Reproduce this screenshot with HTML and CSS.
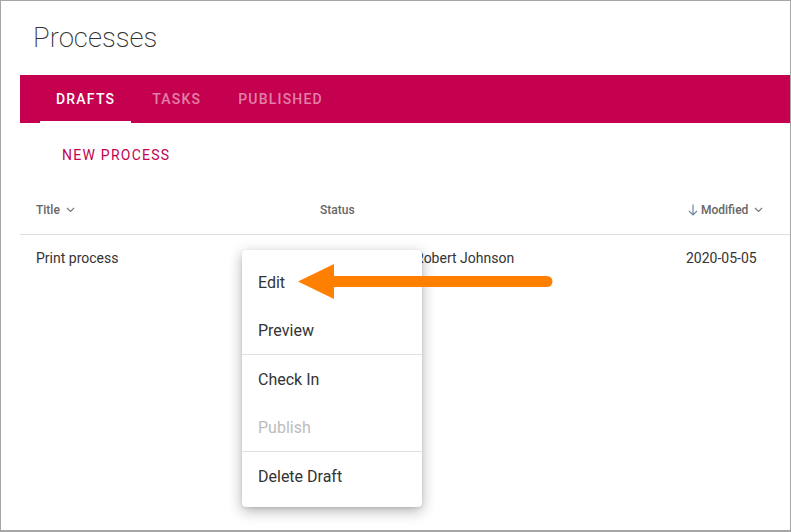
FILE: index.html
```html
<!DOCTYPE html>
<html>
<head>
<meta charset="utf-8">
<link rel="stylesheet" href="styles.css">
</head>
<body>
<div class="frame">
  <h1 class="title">Processes</h1>
  <nav class="tabs">
    <div class="tab active">DRAFTS</div>
    <div class="tab">TASKS</div>
    <div class="tab">PUBLISHED</div>
  </nav>
  <div class="toolbar">
    <button class="new-btn">NEW PROCESS</button>
  </div>
  <div class="list">
    <div class="row head">
      <div class="cell">Title <svg class="chev" width="9" height="6" viewBox="0 0 9 6"><path d="M1 1 L4.5 4.5 L8 1" fill="none" stroke="#777" stroke-width="1.1"/></svg></div>
      <div class="cell">Status</div>
      <div class="cell"></div>
      <div class="cell"><svg class="down" width="10" height="12" viewBox="0 0 10 12"><path d="M5 0.5 V11 M1 7 L5 11 L9 7" fill="none" stroke="#6e86a0" stroke-width="1.2"/></svg>Modified <svg class="chev" width="9" height="6" viewBox="0 0 9 6"><path d="M1 1 L4.5 4.5 L8 1" fill="none" stroke="#777" stroke-width="1.1"/></svg></div>
    </div>
    <div class="row item">
      <div class="cell">Print process</div>
      <div class="cell"></div>
      <div class="cell">Robert Johnson</div>
      <div class="cell">2020-05-05</div>
    </div>
  </div>

  <div class="menu">
    <div class="menu-item">Edit</div>
    <div class="menu-item">Preview</div>
    <div class="menu-sep"></div>
    <div class="menu-item">Check In</div>
    <div class="menu-item disabled">Publish</div>
    <div class="menu-sep"></div>
    <div class="menu-item">Delete Draft</div>
  </div>

  <svg class="arrow" width="270" height="40" viewBox="0 0 270 40">
    <path d="M3 21.5 L39 4 L39 39 Z" fill="#ff8000"/>
    <line x1="36" y1="21.5" x2="252" y2="21.5" stroke="#ff8000" stroke-width="11" stroke-linecap="round"/>
  </svg>
</div>
</body>
</html>
```
FILE: styles.css
```css
html, body {
  margin: 0;
  padding: 0;
  background: #fff;
}
.frame {
  position: relative;
  width: 791px;
  height: 532px;
  box-sizing: border-box;
  border: 1px solid #a6a6a6;
  border-bottom-width: 2px;
  padding-left: 19px;
  overflow: hidden;
  font-family: Roboto, "Liberation Sans", sans-serif;
}
.title {
  margin: 0;
  height: 74px;
  box-sizing: border-box;
  padding: 20px 0 0 13px;
  font-size: 27.5px;
  line-height: 34px;
  font-weight: 200;
  color: #333;
}
.tabs {
  display: flex;
  gap: 5px;
  height: 48px;
  background: #c4004f;
  padding-left: 20px;
}
.tab {
  padding: 0 16px;
  display: flex;
  align-items: center;
  font-size: 14px;
  font-weight: 500;
  letter-spacing: 1.2px;
  color: rgba(255, 255, 255, 0.5);
  box-sizing: border-box;
}
.tab.active {
  color: #fff;
  border-bottom: 2px solid #fff;
  padding-top: 2px;
}
.toolbar {
  height: 64px;
  display: flex;
  align-items: center;
  padding-left: 26px;
}
.new-btn {
  border: 0;
  background: none;
  padding: 8px 16px;
  font-family: Roboto, "Liberation Sans", sans-serif;
  font-size: 14px;
  font-weight: 400;
  letter-spacing: 1.25px;
  color: #c4004f;
}
.row {
  display: grid;
  grid-template-columns: 284px 95px 271px 1fr;
  padding-left: 16px;
  align-items: center;
}
.row.head {
  height: 48px;
  box-sizing: border-box;
  padding-bottom: 2px;
  border-bottom: 1px solid #dedede;
  font-size: 12px;
  font-weight: 500;
  color: #666;
}
.row.head .cell {
  display: flex;
  align-items: center;
}
.chev {
  margin-left: 6px;
  margin-top: 1px;
}
.down {
  margin-right: 3px;
  margin-left: 2px;
}
.row.item {
  height: 46px;
  font-size: 14px;
  color: #333;
}
.menu {
  position: absolute;
  left: 241px;
  top: 249px;
  width: 180px;
  padding: 8px 0 7px;
  background: #fff;
  border-radius: 4px;
  box-shadow: 0 4px 14px rgba(0, 0, 0, 0.3), 0 1px 3px rgba(0, 0, 0, 0.1);
}
.menu-item {
  height: 48px;
  display: flex;
  align-items: center;
  padding-left: 16px;
  font-size: 16px;
  color: #333;
}
.menu-item.disabled {
  color: #bcbcbc;
}
.menu-sep {
  height: 1px;
  background: #e0e0e0;
}
.arrow {
  position: absolute;
  left: 294px;
  top: 259px;
}
```
